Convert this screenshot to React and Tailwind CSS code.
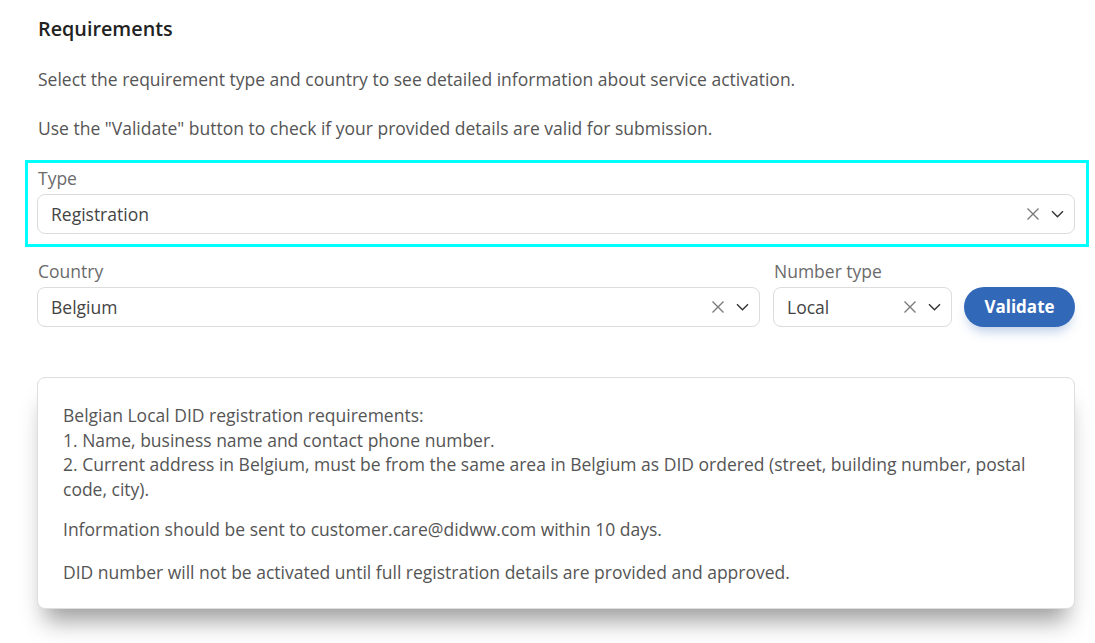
import React from "react";

const ClearIcon = () => (
  <svg width="14" height="14" viewBox="0 0 14 14" fill="none" stroke="#777" strokeWidth="1.3">
    <path d="M1.5 1.5l11 11M12.5 1.5l-11 11" />
  </svg>
);

const ChevronIcon = () => (
  <svg width="13" height="8" viewBox="0 0 13 8" fill="none" stroke="#333" strokeWidth="1.4">
    <path d="M1 1.2l5.5 5.5L12 1.2" />
  </svg>
);

function SelectBox({ value, className = "" }) {
  return (
    <div
      className={`h-10 flex items-center border border-[#dcdcdc] rounded-lg bg-white pl-[13px] pr-[10px] ${className}`}
    >
      <span className="flex-1 text-[#444]">{value}</span>
      <span className="flex items-center gap-[11px]">
        <ClearIcon />
        <ChevronIcon />
      </span>
    </div>
  );
}

function Label({ children }) {
  return <div className="text-[#6b6b6b] leading-6 mb-[4px] pl-px">{children}</div>;
}

export default function App() {
  return (
    <div
      className="w-[1095px] h-[643px] bg-white overflow-hidden text-[17.5px]"
      style={{ fontFamily: '"Open Sans", sans-serif' }}
    >
      <div className="pl-[37px] pr-[20px] pt-[17px]">
        <h2 className="text-[19.8px] font-semibold text-[#222] leading-6 pl-px">Requirements</h2>
        <p className="mt-[26px] text-[#555] leading-6 pl-px">
          Select the requirement type and country to see detailed information about service activation.
        </p>
        <p className="mt-[25px] text-[#555] leading-6 pl-px">
          Use the "Validate" button to check if your provided details are valid for submission.
        </p>

        <div className="mt-[20px] -ml-[12px] -mr-[14px] border-[3px] border-[#00ffff] pt-[3px] pb-[10px] pl-[9px] pr-[11px]">
          <Label>Type</Label>
          <SelectBox value="Registration" />
        </div>

        <div className="mt-[12px] flex items-end">
          <div className="w-[723px]">
            <Label>Country</Label>
            <SelectBox value="Belgium" />
          </div>
          <div className="w-[179px] ml-[13px]">
            <Label>Number type</Label>
            <SelectBox value="Local" />
          </div>
          <button
            type="button"
            className="ml-[12px] w-[111px] h-10 rounded-full bg-[#3268b8] text-white font-bold text-[17px] shadow-[0_8px_12px_-4px_rgba(50,104,184,0.35)]"
          >
            Validate
          </button>
        </div>

        <div className="mt-[50px] w-[1038px] border border-[#dedede] rounded-lg bg-white pl-[25px] pr-[24px] pt-[25px] pb-[24px] text-[#555] leading-[24.5px] shadow-[0_20px_22px_-8px_rgba(0,0,0,0.38)]">
          <p>
            Belgian Local DID registration requirements:
            <br />
            1. Name, business name and contact phone number.
            <br />
            2. Current address in Belgium, must be from the same area in Belgium as DID ordered (street, building number, postal code, city).
          </p>
          <p className="mt-[16px]">Information should be sent to customer.care@didww.com within 10 days.</p>
          <p className="mt-[18px]">DID number will not be activated until full registration details are provided and approved.</p>
        </div>
      </div>
    </div>
  );
}
